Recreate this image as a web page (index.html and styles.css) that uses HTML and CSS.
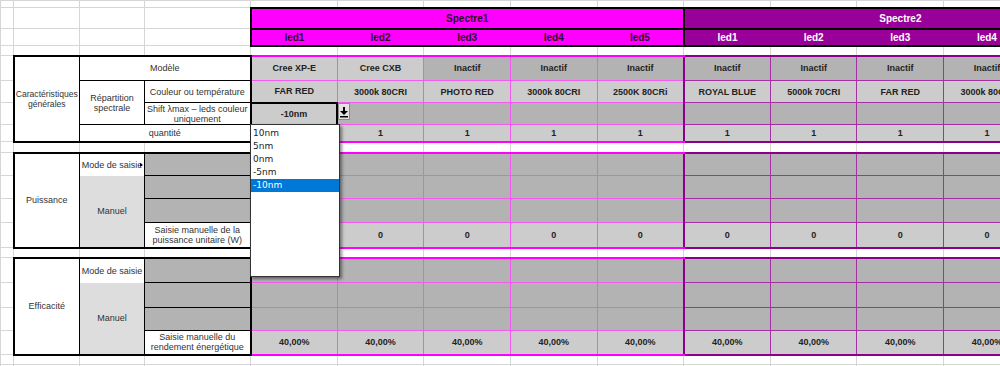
FILE: index.html
```html
<!DOCTYPE html>
<html lang="fr">
<head>
  <meta charset="UTF-8">
  <title>Spectres</title>
  <link rel="stylesheet" href="styles.css">
</head>
<body>
  <div class="sheet">
    <table class="grid">
      <colgroup>
        <col class="c-a"><col class="c-b"><col class="c-c"><col class="c-d">
        <col class="c-v"><col class="c-v"><col class="c-v"><col class="c-v"><col class="c-v">
        <col class="c-v"><col class="c-v"><col class="c-v"><col class="c-v"><col class="c-v">
      </colgroup>
      <tr class="r0">
        <td></td><td></td><td></td><td></td>
        <td></td><td></td><td></td><td></td><td></td>
        <td></td><td></td><td></td><td></td><td></td>
      </tr>
      <tr class="r1">
        <td></td><td></td><td></td><td></td>
        <td colspan="5" class="hd s1">Spectre1</td>
        <td colspan="5" class="hd s2">Spectre2</td>
      </tr>
      <tr class="r2">
        <td></td><td></td><td></td><td></td>
        <td class="hd s1 led first">led1</td><td class="hd s1 led">led2</td><td class="hd s1 led">led3</td><td class="hd s1 led">led4</td><td class="hd s1 led">led5</td>
        <td class="hd s2 led first">led1</td><td class="hd s2 led">led2</td><td class="hd s2 led">led3</td><td class="hd s2 led">led4</td><td class="hd s2 led">led5</td>
      </tr>
      <tr class="r3">
        <td></td><td></td><td></td><td></td>
        <td></td><td></td><td></td><td></td><td></td>
        <td></td><td></td><td></td><td></td><td></td>
      </tr>

      <!-- Caractéristiques générales -->
      <tr class="r4 btop">
        <td></td>
        <td rowspan="4" class="lab el et eb narrow">Caractéristiques générales</td>
        <td colspan="2" class="lab et er">Modèle</td>
        <td class="m g1 first">Cree XP-E</td><td class="m g1">Cree CXB</td><td class="m g2">Inactif</td><td class="m g2">Inactif</td><td class="m g2">Inactif</td>
        <td class="p g2 first">Inactif</td><td class="p g2">Inactif</td><td class="p g2">Inactif</td><td class="p g2">Inactif</td><td class="p g2">Inactif</td>
      </tr>
      <tr class="r5">
        <td></td>
        <td rowspan="2" class="lab">Répartition spectrale</td>
        <td class="lab er">Couleur ou température</td>
        <td class="m g1 first">FAR RED</td><td class="m g1">3000k 80CRI</td><td class="m g1">PHOTO RED</td><td class="m g1">3000k 80CRI</td><td class="m g1">2500K 80CRi</td>
        <td class="p g1 first">ROYAL BLUE</td><td class="p g1">5000k 70CRI</td><td class="p g1">FAR RED</td><td class="p g1">3000k 80CRI</td><td class="p g1">PHOTO RED</td>
      </tr>
      <tr class="r6">
        <td></td>
        <td class="lab er">Shift λmax – leds couleur uniquement</td>
        <td class="m g1 first picked">-10nm</td><td class="m g2"></td><td class="m g2"></td><td class="m g2"></td><td class="m g2"></td>
        <td class="p g2 first"></td><td class="p g2"></td><td class="p g2"></td><td class="p g2"></td><td class="p g2"></td>
      </tr>
      <tr class="r7 bbot">
        <td></td>
        <td colspan="2" class="lab eb er">quantité</td>
        <td class="m g1 first">1</td><td class="m g1">1</td><td class="m g1">1</td><td class="m g1">1</td><td class="m g1">1</td>
        <td class="p g1 first">1</td><td class="p g1">1</td><td class="p g1">1</td><td class="p g1">1</td><td class="p g1">1</td>
      </tr>
      <tr class="r8">
        <td></td><td></td><td></td><td></td>
        <td></td><td></td><td></td><td></td><td></td>
        <td></td><td></td><td></td><td></td><td></td>
      </tr>

      <!-- Puissance -->
      <tr class="r9 btop">
        <td></td>
        <td rowspan="4" class="lab el et eb">Puissance</td>
        <td class="lab et mode more">Mode de saisie</td>
        <td class="lab et er g2"></td>
        <td class="m g2 first"></td><td class="m g2"></td><td class="m g2"></td><td class="m g2"></td><td class="m g2"></td>
        <td class="p g2 first"></td><td class="p g2"></td><td class="p g2"></td><td class="p g2"></td><td class="p g2"></td>
      </tr>
      <tr class="r10">
        <td></td>
        <td rowspan="3" class="lab eb manual">Manuel</td>
        <td class="lab er g2"></td>
        <td class="m g2 first"></td><td class="m g2"></td><td class="m g2"></td><td class="m g2"></td><td class="m g2"></td>
        <td class="p g2 first"></td><td class="p g2"></td><td class="p g2"></td><td class="p g2"></td><td class="p g2"></td>
      </tr>
      <tr class="r11">
        <td></td>
        <td class="lab er g2"></td>
        <td class="m g2 first"></td><td class="m g2"></td><td class="m g2"></td><td class="m g2"></td><td class="m g2"></td>
        <td class="p g2 first"></td><td class="p g2"></td><td class="p g2"></td><td class="p g2"></td><td class="p g2"></td>
      </tr>
      <tr class="r12 bbot">
        <td></td>
        <td class="lab eb er">Saisie manuelle de la puissance unitaire (W)</td>
        <td class="m g1 first">0</td><td class="m g1">0</td><td class="m g1">0</td><td class="m g1">0</td><td class="m g1">0</td>
        <td class="p g1 first">0</td><td class="p g1">0</td><td class="p g1">0</td><td class="p g1">0</td><td class="p g1">0</td>
      </tr>
      <tr class="r13">
        <td></td><td></td><td></td><td></td>
        <td></td><td></td><td></td><td></td><td></td>
        <td></td><td></td><td></td><td></td><td></td>
      </tr>

      <!-- Efficacité -->
      <tr class="r14 btop">
        <td></td>
        <td rowspan="4" class="lab el et eb">Efficacité</td>
        <td class="lab et mode">Mode de saisie</td>
        <td class="lab et er g2"></td>
        <td class="m g2 first"></td><td class="m g2"></td><td class="m g2"></td><td class="m g2"></td><td class="m g2"></td>
        <td class="p g2 first"></td><td class="p g2"></td><td class="p g2"></td><td class="p g2"></td><td class="p g2"></td>
      </tr>
      <tr class="r15">
        <td></td>
        <td rowspan="3" class="lab eb manual">Manuel</td>
        <td class="lab er g2"></td>
        <td class="m g2 first"></td><td class="m g2"></td><td class="m g2"></td><td class="m g2"></td><td class="m g2"></td>
        <td class="p g2 first"></td><td class="p g2"></td><td class="p g2"></td><td class="p g2"></td><td class="p g2"></td>
      </tr>
      <tr class="r16">
        <td></td>
        <td class="lab er g2"></td>
        <td class="m g2 first"></td><td class="m g2"></td><td class="m g2"></td><td class="m g2"></td><td class="m g2"></td>
        <td class="p g2 first"></td><td class="p g2"></td><td class="p g2"></td><td class="p g2"></td><td class="p g2"></td>
      </tr>
      <tr class="r17 bbot">
        <td></td>
        <td class="lab eb er">Saisie manuelle du rendement énergétique</td>
        <td class="m g1 first">40,00%</td><td class="m g1">40,00%</td><td class="m g1">40,00%</td><td class="m g1">40,00%</td><td class="m g1">40,00%</td>
        <td class="p g1 first">40,00%</td><td class="p g1">40,00%</td><td class="p g1">40,00%</td><td class="p g1">40,00%</td><td class="p g1">40,00%</td>
      </tr>
      <tr class="r18">
        <td></td><td></td><td></td><td></td>
        <td></td><td></td><td></td><td></td><td></td>
        <td></td><td></td><td></td><td></td><td></td>
      </tr>
      <tr class="r19">
        <td></td><td></td><td></td><td></td>
        <td></td><td></td><td></td><td></td><td></td>
        <td></td><td></td><td></td><td></td><td></td>
      </tr>
    </table>

    <!-- liste déroulante ouverte sur la cellule Shift de led1 -->
    <span class="drop-btn">
      <svg width="10" height="14" viewBox="0 0 10 14">
        <rect x="4" y="2" width="2" height="4" fill="#000"/>
        <polygon points="1,6 9,6 5,10" fill="#000"/>
        <rect x="1" y="11" width="8" height="1.5" fill="#000"/>
      </svg>
    </span>
    <ul class="drop-list">
      <li>10nm</li>
      <li>5nm</li>
      <li>0nm</li>
      <li>-5nm</li>
      <li class="sel">-10nm</li>
    </ul>
  </div>
</body>
</html>
```

FILE: styles.css
```css
body {
    margin: 0;
    background: #fff;
    overflow: hidden;
}

.sheet {
    position: relative;
    width: 1000px;
    height: 366px;
    overflow: hidden;
}

.grid {
    border-collapse: collapse;
    table-layout: fixed;
    width: 1118px;
    font-family: "Liberation Sans", Arial, sans-serif;
    font-size: 9px;
    color: #222;
}

.c-a { width: 13px; }
.c-b { width: 66px; }
.c-c { width: 65px; }
.c-d { width: 106px; }
.c-v { width: 86.6px; }

.grid td {
    border: 1px solid #d6d6d6;
    padding: 0;
    text-align: center;
    vertical-align: middle;
    overflow: hidden;
}

.r0 { height: 7px; }
.r1 { height: 21px; }
.r2 { height: 17px; }
.r3 { height: 10px; }
.r4 { height: 25px; }
.r5 { height: 22px; }
.r6 { height: 22px; }
.r7 { height: 17px; }
.r8 { height: 11px; }
.r9 { height: 23px; }
.r10 { height: 23px; }
.r11 { height: 24px; }
.r12 { height: 25px; }
.r13 { height: 10px; }
.r14 { height: 25px; }
.r15 { height: 25px; }
.r16 { height: 23px; }
.r17 { height: 24px; }
.r18 { height: 10px; }
.r19 { height: 20px; }

/* en-têtes Spectre / led */
.grid td.hd {
    font-size: 10px;
    font-weight: bold;
    border: 2px solid #000;
}

.grid td.s1 {
    background: #ff00ff;
    color: #2a0a2a;
}

.grid td.s2 {
    background: #990099;
    color: #fff;
}

.grid td.led {
    border-left: none;
    border-right: none;
}

.grid td.led.first {
    border-left: 2px solid #000;
}

/* libellés à gauche */
.grid td.lab {
    border: 1px solid #000;
    background: #fff;
    color: #333;
    line-height: 10px;
    font-weight: normal;
}

.grid td.lab.el { border-left: 2px solid #000; }
.grid td.lab.et { border-top: 2px solid #000; }
.grid td.lab.eb { border-bottom: 2px solid #000; }
.grid td.lab.er { border-right: 2px solid #000; }

.grid td.narrow {
    font-size: 8.6px;
}

.grid td.mode {
    border-bottom: none;
    position: relative;
}

.grid td.manual {
    border-top: none;
    background: #dddddd;
}

.grid td.more::after {
    content: "";
    position: absolute;
    right: 1px;
    top: 9px;
    border-left: 3px solid #000;
    border-top: 2px solid transparent;
    border-bottom: 2px solid transparent;
}

/* cellules de données */
.grid td.m,
.grid td.p {
    font-weight: bold;
}

.grid td.m { border: 1px solid #f25af2; }
.grid td.p { border: 1px solid #a530a5; }
.grid td.p.first { border-left: 2px solid #8a008a; }

.btop td.m { border-top: 2px solid #ff00ff; }
.bbot td.m { border-bottom: 2px solid #ff00ff; }
.btop td.p { border-top: 2px solid #8a008a; }
.bbot td.p { border-bottom: 2px solid #8a008a; }

.grid td.g1 { background: #cccccc; }
.grid td.g2 { background: #b3b3b3; }

.grid td.picked {
    border: 2px solid #000;
}

/* liste déroulante */
.drop-btn {
    position: absolute;
    left: 338px;
    top: 103px;
    width: 12px;
    height: 17px;
    display: flex;
    align-items: center;
    justify-content: center;
    background: #e2e2e2;
    border: 1px solid #8c8c8c;
    box-sizing: border-box;
}

.drop-list {
    position: absolute;
    left: 250px;
    top: 124px;
    width: 90px;
    height: 153px;
    margin: 0;
    padding: 2px 0 0;
    list-style: none;
    box-sizing: border-box;
    background: #fff;
    border: 1px solid #333;
    box-shadow: 2px 2px 3px rgba(0, 0, 0, 0.45);
    font-family: "DejaVu Sans", sans-serif;
    font-size: 9px;
    color: #222;
}

.drop-list li {
    height: 13px;
    line-height: 13px;
    padding-left: 2px;
}

.drop-list li.sel {
    background: #0078d7;
    color: #fff;
}
```
